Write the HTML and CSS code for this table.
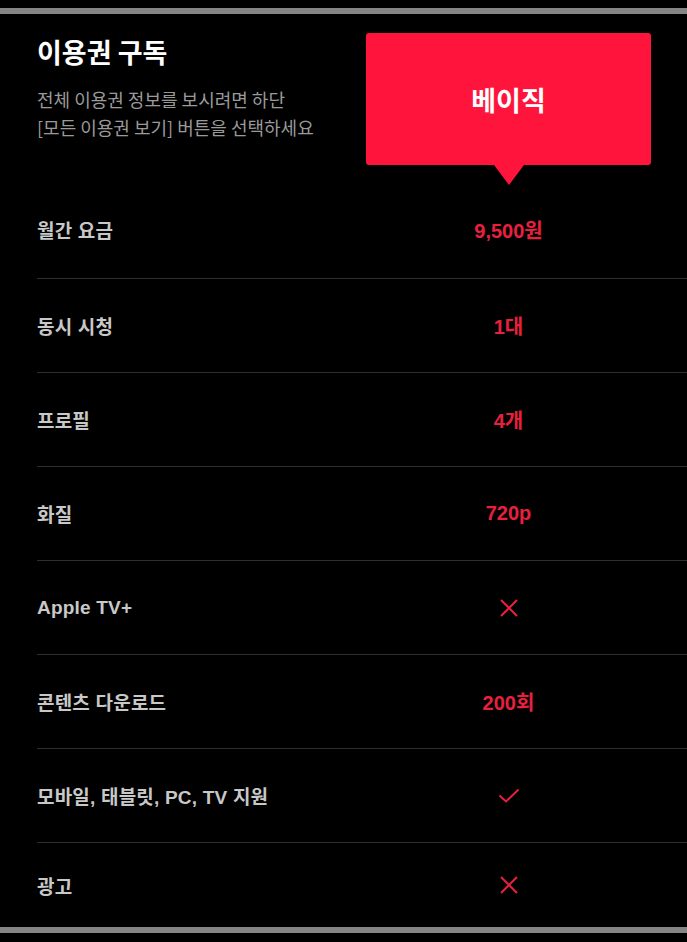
FILE: index.html
```html
<!DOCTYPE html>
<html>

<head>
    <meta charset='utf-8'>
    <title>이용권 구독</title>
    <meta name='viewport' content='width=device-width, initial-scale=1'>
    <link rel="stylesheet" href="styles.css">
</head>

<body>
    <section class="plan-table">
        <div class="plan-head">
            <div class="plan-intro">
                <h2>이용권 구독</h2>
                <p>전체 이용권 정보를 보시려면 하단<br>[모든 이용권 보기] 버튼을 선택하세요</p>
            </div>
            <div class="plan-badge">베이직</div>
        </div>

        <div class="plan-row">
            <span class="row-label">월간 요금</span>
            <span class="row-value">9,500원</span>
        </div>
        <div class="plan-row">
            <span class="row-label">동시 시청</span>
            <span class="row-value">1대</span>
        </div>
        <div class="plan-row">
            <span class="row-label">프로필</span>
            <span class="row-value">4개</span>
        </div>
        <div class="plan-row">
            <span class="row-label">화질</span>
            <span class="row-value">720p</span>
        </div>
        <div class="plan-row">
            <span class="row-label">Apple TV+</span>
            <span class="row-value">
                <svg class="mark" width="20" height="20" viewBox="0 0 20 20"><path d="M2 2L18 18M18 2L2 18" /></svg>
            </span>
        </div>
        <div class="plan-row">
            <span class="row-label">콘텐츠 다운로드</span>
            <span class="row-value">200회</span>
        </div>
        <div class="plan-row">
            <span class="row-label">모바일, 태블릿, PC, TV 지원</span>
            <span class="row-value">
                <svg class="mark" width="22" height="16" viewBox="0 0 22 16"><path d="M1.5 7.5L8 13.5L20.5 1.5" /></svg>
            </span>
        </div>
        <div class="plan-row">
            <span class="row-label">광고</span>
            <span class="row-value">
                <svg class="mark" width="20" height="20" viewBox="0 0 20 20"><path d="M2 2L18 18M18 2L2 18" /></svg>
            </span>
        </div>
    </section>
</body>

</html>
```

FILE: styles.css
```css
body {
    margin: 0;
    background: #000;
    font-family: "Liberation Sans", "Noto Sans CJK KR", sans-serif;
}

.plan-table {
    margin-top: 8px;
    border-top: 6px solid #858585;
    border-bottom: 6px solid #858585;
}

.plan-head {
    display: grid;
    grid-template-columns: 329px 285px;
    padding: 19px 0 0 37px;
}

.plan-intro h2 {
    margin: 2px 0 0;
    font-family: "Noto Sans CJK KR", sans-serif;
    font-size: 27px;
    font-weight: 700;
    line-height: 34px;
    color: #fff;
}

.plan-intro p {
    margin: 16px 0 0;
    font-family: "Noto Sans CJK KR", sans-serif;
    font-size: 18px;
    line-height: 28px;
    color: #9a9a9a;
}

.plan-badge {
    position: relative;
    height: 132px;
    border-radius: 3px;
    background: #ff153c;
    color: #fff;
    font-family: "Noto Sans CJK KR", sans-serif;
    font-size: 27px;
    font-weight: 700;
    display: flex;
    align-items: center;
    justify-content: center;
}

.plan-badge::after {
    content: "";
    position: absolute;
    left: 50%;
    bottom: -20px;
    margin-left: -15px;
    border-left: 15px solid transparent;
    border-right: 15px solid transparent;
    border-top: 20px solid #ff153c;
}

.plan-row {
    display: grid;
    grid-template-columns: 329px 285px;
    align-items: center;
    height: 93px;
    margin-left: 37px;
    border-top: 1px solid #2e2e2e;
}

.plan-head + .plan-row {
    border-top: 0;
    height: 93px;
    margin-top: 20px;
    padding-bottom: 4px;
    box-sizing: border-box;
}

.plan-row:last-child {
    height: 84px;
}

.row-label {
    font-size: 19px;
    font-weight: 700;
    letter-spacing: 0.2px;
    color: #c8c8c8;
}

.row-value {
    display: flex;
    justify-content: center;
    font-size: 20px;
    font-weight: 700;
    color: #e8203f;
}

.mark {
    display: block;
    fill: none;
    stroke: #e8203f;
    stroke-width: 2;
}
```
